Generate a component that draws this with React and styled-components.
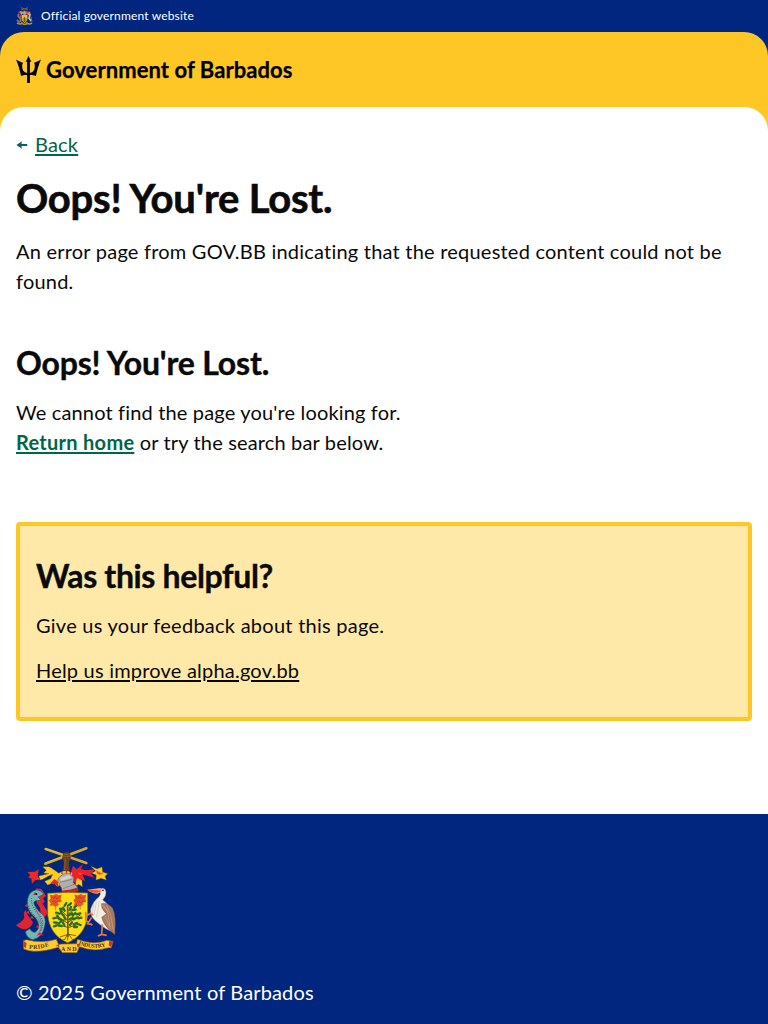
import React from 'react';
import styled, { createGlobalStyle } from 'styled-components';

const GlobalStyle = createGlobalStyle`
  *, *::before, *::after { box-sizing: border-box; }
  body {
    margin: 0;
    background: #fff;
    color: #0a0a0a;
    font-family: Lato, "Liberation Sans", sans-serif;
    font-size: 20px;
    line-height: 30px;
    font-variant-ligatures: none;
  }
  h1, h2, p { margin: 0; }
`;

const Page = styled.div`
  display: flex;
  flex-direction: column;
  min-height: 1024px;
`;

const OfficialBar = styled.div`
  display: flex;
  align-items: center;
  gap: 8px;
  height: 32px;
  padding: 0 16px;
  background: #00267f;
  color: #fff;
  font-size: 12px;
  line-height: 18px;
`;

const HeaderBack = styled.div`
  background: #00267f;
`;

const Header = styled.header`
  display: flex;
  align-items: center;
  gap: 5px;
  height: 75px;
  padding: 0 16px;
  background: #ffc726;
  border-radius: 24px 24px 0 0;
  color: #000;
`;

const MainBack = styled.div`
  background: #ffc726;
`;

const Main = styled.main`
  display: flex;
  flex-direction: column;
  height: 707px;
  padding: 22px 16px 0;
  background: #fff;
  border-radius: 24px 24px 0 0;
`;

const Track = styled.span`
  white-space: pre;
  letter-spacing: ${(p) => p.$ls || 0}px;
`;

const Wordmark = styled.span`
  font-size: 22px;
  font-weight: 700;
  white-space: nowrap;
  letter-spacing: 0.07px;
  -webkit-text-stroke: 0.25px currentColor;
`;

const BackRow = styled.div`
  display: flex;
  align-items: center;
  gap: 7px;

  svg { margin-top: 2px; }
`;

const Link = styled.a`
  color: ${(p) => p.$color || 'inherit'};
  font-weight: ${(p) => (p.$bold ? 700 : 400)};
  letter-spacing: ${(p) => p.$ls || 0}px;
  text-decoration: underline;
  text-decoration-thickness: 2px;
  text-underline-offset: 2px;
`;

const Title = styled.h1`
  margin-top: 14px;
  font-size: 40px;
  line-height: 50px;
  font-weight: 700;
  letter-spacing: -0.22px;
  -webkit-text-stroke: 0.6px currentColor;
`;

const Subtitle = styled.h2`
  font-size: 32px;
  line-height: 40px;
  font-weight: 700;
  letter-spacing: ${(p) => p.$ls || 0}px;
  -webkit-text-stroke: 0.4px currentColor;
`;

const Text = styled.p`
  margin-top: ${(p) => p.$mt || 0}px;
`;

const Section = styled.section`
  margin-top: 47px;
`;

const Feedback = styled.section`
  margin-top: 65px;
  height: 199px;
  padding: 30px 16px 0;
  border: 4px solid #ffc726;
  border-radius: 4px;
  background: #ffe9a8;
`;

const Footer = styled.footer`
  display: flex;
  flex-direction: column;
  gap: 23px;
  height: 210px;
  padding: 32px 16px 0;
  background: #00267f;
  color: #fff;
`;

const Graphic = styled.svg`
  display: block;
  flex: none;
`;

function Trident() {
  return (
    <Graphic width="25" height="28" viewBox="0 0 25 28" fill="#000">
      <path d="M12.500 0 L15.400 6 L13.900 5.500 V17 C16.100 16.700 17.700 15.600 18.300 13.600 C19 10.800 19.200 8.400 18 6.700 C20.300 5.900 23 4.800 25 3.400 C22.600 8.400 21.200 14.400 19.900 20 C18 19.100 15.700 18.900 13.900 19 V27 H11.100 V19 C9.200 18.900 7 19.100 5.100 20 C3.800 14.400 2.400 8.400 0 3.400 C2 4.800 4.700 5.900 7 6.700 C5.800 8.400 6 10.800 6.700 13.600 C7.200 15.600 8.900 16.700 11.100 17 V5.500 L9.600 6 Z" />
    </Graphic>
  );
}

function BackArrow() {
  return (
    <Graphic width="12" height="12" viewBox="0 0 12 12">
      <path d="M.4 6 L6 2.200 L5.400 5 H11.200 V7 H5.400 L6 9.800 Z" fill="#0e5f64" />
    </Graphic>
  );
}

function CoatOfArms() {
  return (
    <Graphic width="101" height="108" viewBox="6 6 303 324">
      <g stroke="#d8a81f" strokeWidth="8" strokeLinecap="round">
        <path d="M95 15 L217 57" />
        <path d="M94 59 L217 13" />
      </g>
      <path d="M95 14 L150 33 M94 57 L150 36" stroke="#f2cf42" strokeWidth="2" />
      <path d="M148 28 q9-7 20 0 l3 13-6 12 2 31h-20l3-30-6-11z" fill="#69401f" />
      <path d="M150 31h16M149 37h18M154 44l-2 34" stroke="#a06b38" strokeWidth="2" />

      <path d="M143 93 C127 84 113 70 104 68 L86 68 L97 79 L89 87 L105 89 L75 96 L78 108 L86 106 L102 97 L116 91 L110 104 L92 112 L101 123 L119 116 L129 127 L143 123 Z" fill="#ffcb20" stroke="#8e6b18" strokeWidth="1" />
      <path d="M74 76 L63 83 L40 84 L48 92 L43 102 L52 103 L54 119 L64 108 L78 107 L71 96 Z" fill="#ef2922" />
      <path d="M108 119l13-14 10 7 3 18-11-9z" fill="#ed2421" />
      <path d="M169 91 L177 65 L188 76 L207 61 L201 75 L216 79 L243 76 L231 89 L242 101 L223 96 L205 91 L214 111 L199 106 L203 122 L188 121 L174 107 L166 99 Z" fill="#ee2027" />
      <path d="M231 67 L249 75 L264 69 L266 84 L281 89 L273 97 L277 108 L261 103 L246 108 L247 93 L233 87 L245 81 Z M189 102l15 7 1 19-11-7-9 5 1-14z" fill="#ffcc1e" stroke="#8e6b18" strokeWidth="1" />
      <path d="M247 79l12 7 12 0-14 7-9-5z M191 85l18 4-12 4z" fill="#f15320" />
      <path d="M135 87 Q154 75 175 87 L173 95 Q154 86 138 96Z" fill="#ffd13d" />
      <path d="M144 83v8M157 80v8M169 84v8" stroke="#da2825" strokeWidth="4" />
      <path d="M137 98 Q149 85 166 88 L179 100 L178 116 L191 130 Q174 151 145 144 Q143 130 136 121 L131 108 Z" fill="#b1afac" stroke="#595858" strokeWidth="1.500" />
      <path d="M138 102 L165 93 L173 101 L141 111 Z" fill="#d4d1cd" />
      <path d="M138 115 L175 106 M147 134 L181 121" stroke="#77726f" strokeWidth="2" />
      <path d="M144 140 Q173 138 191 130 L194 140 Q171 155 144 147Z" fill="#b72723" />

      <path d="M101 148 Q161 143 221 147 V211 C218 252 196 282 161 296 C124 281 104 251 101 210 Z" fill="#ffdc18" stroke="#8b6b16" strokeWidth="2" />
      <g fill="#ea5325">
        <path d="M107 152l11 2 8-4 9 4 8-2-3 12 3 9-12 2 4 8-10 5-10-4-8 3 3-10-6-8 6-5z" />
        <path d="M181 152l11 2 8-4 9 4 8-2-3 12 3 9-8 2-3 9-12 4-10-4-5 3 3-11-4-8 6-5z" />
      </g>
      <path d="M112 158l8 6 4-7 4 8 8-6M114 174l8-4 3 7 6-7 6 4M186 158l8 6 4-7 4 8 8-6M188 174l8-4 3 7 6-7 6 4" fill="none" stroke="#b93a20" strokeWidth="2.500" />
      <path d="M125 181v17M199 180v16" stroke="#778022" strokeWidth="2" />
      <g stroke="#70501a" strokeWidth="3" fill="none">
        <path d="M161 182 L162 278" strokeWidth="5" />
        <path d="M161 218l-21-21M162 211l22-20M161 238l-36-25M162 235l37-22M161 250l-38-11M162 251l34-11" />
        <path d="M161 268l-8 18-7 2M162 268l13 18 7 1M159 272l-21 7M164 271l22 4M162 276l-2 14" strokeWidth="2.500" />
      </g>
      <g stroke="#286f28" strokeWidth="7" strokeLinecap="round" fill="none">
        <path d="M152 185l5-8M165 183l6-5M146 196l-8-2M152 200l-5-9M167 198l4-9M175 198l10-1M181 190l6-5" />
        <path d="M136 209l-10-3M143 209l-3-10M150 216l-6-7M165 214l9-6M176 215l8-8M188 211l11-3" />
        <path d="M128 221l-10 2M135 225l-5-10M148 230l-10-4M155 226l-5-8M167 226l9-5M179 226l9-5M193 223l9-2" />
        <path d="M120 235l9 1M134 238l7-5M143 246l-9-1M151 244l-4-8M168 243l6-8M179 241l10-4M194 241l6 2M180 249l9 0M127 245l-7 2" />
      </g>

      <path d="M67 133 L82 135 L91 148 L96 156 L87 163 L93 174 L85 178 L102 205 L91 221 L80 209 L78 191 L68 177 Z" fill="#e52433" />
      <path d="M31 222 Q25 232 6 244 Q25 260 39 254 Q54 249 57 235 L39 210 L35 197 L29 207Z" fill="#df2431" />
      <path d="M40 183 Q38 143 67 137 Q82 139 90 151 L72 159 L82 169 L65 170 Q56 174 62 184 Q72 203 85 211 Q98 222 92 247 Q86 281 56 287 Q38 282 34 263 L47 254 Q56 269 66 263 Q83 247 65 222 Q43 204 40 183Z" fill="#70b8b1" stroke="#354f68" strokeWidth="2" />
      <path d="M43 185q6 22 24 34 20 20 11 46M53 162q-4 27 26 54 12 16 3 44" fill="none" stroke="#315f75" strokeWidth="3" strokeDasharray="3 4" />
      <path d="M62 189q17 29 22 51-4 26-17 37" fill="none" stroke="#e9495e" strokeWidth="3" />
      <path d="M39 179l-7 7 8 3M43 199l-7 8 11 3M54 215l-7 8 13 1M73 242l-8 8 10 2M76 265l14 9-20 0M57 153l6-9 8 8" fill="#e52433" />
      <circle cx="67" cy="150" r="3" fill="#151d32" />

      <path d="M260 134 Q274 130 276 144 Q277 156 266 168 Q288 181 292 205 Q292 230 303 266 Q274 257 251 236 Q227 220 230 195 Q237 171 255 158 Q263 149 256 143Z" fill="#f3eee3" stroke="#85796e" strokeWidth="1.500" />
      <path d="M262 179 Q278 173 296 192 Q308 218 302 272 L286 258 Q267 240 263 220 L277 209 Q261 196 262 179Z" fill="#a87860" stroke="#654d41" strokeWidth="1" />
      <path d="M269 185l12 17 8 55M278 184l12 30 8 45M263 181l19 23M273 215l12 31" stroke="#caa48a" strokeWidth="2" fill="none" />
      <path d="M239 181l-4 28M247 173l-7 41M256 170l-8 49" stroke="#ccc2b8" strokeWidth="2" />
      <path d="M220 137 L259 132 L266 140 L251 149 Q231 148 220 137Z" fill="#fb9f81" />
      <path d="M219 137 L249 139 L262 142 L249 146 Q229 146 219 137Z" fill="#ee5526" />
      <circle cx="267" cy="139" r="2.500" fill="#151515" />
      <path d="M265 241l-2 30-11 5M263 271l15 3M233 220l-12 19 10 2M226 235l-10-4-1-28M217 216l12-8 8 5M230 239l5 5" fill="none" stroke="#e57942" strokeWidth="5" />

      <path d="M28 290 L38 287 Q84 299 127 286 L134 302 L141 300 L188 299 L190 286 Q241 305 279 289 L297 292 L292 311 L279 312 Q241 325 196 308 L189 326 H145 L133 310 Q79 327 45 320 L29 315Z" fill="#ffca2f" stroke="#8c5a1f" strokeWidth="2" />
      <path d="M28 290l10 8-3 15-6-5zM125 303l9-1 4 9zM189 300l7-1 1 8-7 3zM286 290l11 3-6 16-7-5z" fill="#cb3032" />
      <path id="motto-left" d="M45 314 Q82 318 118 301" fill="none" />
      <path id="motto-right" d="M193 301 Q237 320 278 305" fill="none" />
      <g fontFamily="Liberation Serif" fontWeight="700" fontSize="18" fill="#483318">
        <text><textPath href="#motto-left" textLength="62">PRIDE</textPath></text>
        <text x="141" y="321" textLength="47">AND</text>
        <text fontSize="17"><textPath href="#motto-right" textLength="84">INDUSTRY</textPath></text>
      </g>
    </Graphic>
  );
}

function SmallCrest() {
  return (
    <Graphic width="17" height="18" viewBox="0 0 17 18">
      <path d="M5 .8l7 2M5 3l7-2.200" stroke="#b78c2a" strokeWidth=".6" />
      <path d="M8.500 1v4" stroke="#68442b" />
      <path d="M2 5l2-1 3 1-1 3-2-1zM10 4l4 .5 1 2-2 2-3-1z" fill="#c9352f" />
      <path d="M4 4l4 1-3 3zM11 6l3-1-1 3z" fill="#d8a72b" />
      <circle cx="8.500" cy="6" r="2" fill="#a7a4a0" />
      <path d="M5.500 8h6v4q-1 3-3 4-3-2-3-5z" fill="#e6bd20" />
      <path d="M8.500 10v5M6.500 12h4M7 14h3" stroke="#57662a" strokeWidth="1" />
      <path d="M3 7q-2 2 1 4 2 3-1 4l-2-2" fill="none" stroke="#80777e" strokeWidth="1.800" />
      <path d="M4 8l1 3M2 13l1 2" stroke="#cb3d46" />
      <path d="M13 7l1 1-1 3 2 3" fill="none" stroke="#c8b9b0" strokeWidth="1.800" />
      <path d="M15 10l1 5" stroke="#8c6255" />
      <path d="M1 16q4 2 5 0 3 3 5 0 2 2 5 0" fill="none" stroke="#bd9129" strokeWidth="1.700" />
    </Graphic>
  );
}

export default function App() {
  return (
    <Page>
      <GlobalStyle />
      <OfficialBar>
        <SmallCrest />
        <Track $ls={0.16}>Official government website</Track>
      </OfficialBar>
      <HeaderBack>
        <Header>
          <Trident />
          <Wordmark>Government of Barbados</Wordmark>
        </Header>
      </HeaderBack>
      <MainBack>
        <Main>
          <BackRow>
            <BackArrow />
            <Link href="#" $color="#00654a" $ls={0.2}>Back</Link>
          </BackRow>
          <Title>Oops! You're Lost.</Title>
          <Text $mt={13}>
            <Track $ls={0.22}>An error page from GOV.BB indicating that the requested content could not be</Track>
            <br />
            <Track $ls={0.2}>found.</Track>
          </Text>
          <Section>
            <Subtitle $ls={-0.17}>Oops! You're Lost.</Subtitle>
            <Text $mt={14}>
              <Track $ls={0.16}>We cannot find the page you're looking for.</Track>
              <br />
              <Link href="#" $color="#00654a" $bold $ls={0.28}>Return home</Link>
              <Track $ls={0.16}> or try the search bar below.</Track>
            </Text>
          </Section>
          <Feedback>
            <Subtitle $ls={-0.35}>Was this helpful?</Subtitle>
            <Text $mt={14}><Track $ls={0.26}>Give us your feedback about this page.</Track></Text>
            <Text $mt={15}><Link href="#" $ls={0.21}>Help us improve alpha.gov.bb</Link></Text>
          </Feedback>
        </Main>
      </MainBack>
      <Footer>
        <CoatOfArms />
        <Track $ls={0.15}>© 2025 Government of Barbados</Track>
      </Footer>
    </Page>
  );
}
